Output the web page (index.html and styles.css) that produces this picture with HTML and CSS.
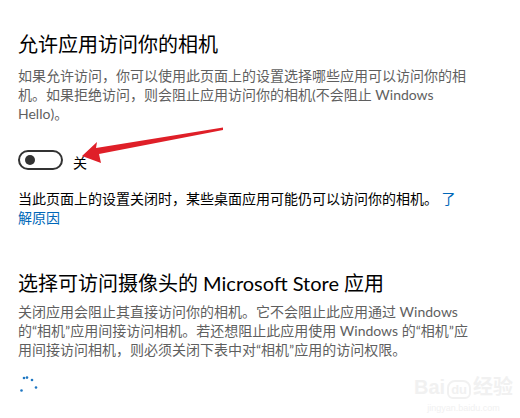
FILE: index.html
```html
<!DOCTYPE html>
<html lang="zh-CN">
<head>
  <meta charset="UTF-8">
  <title>相机隐私设置</title>
  <link rel="stylesheet" href="styles.css">
</head>
<body>
  <div class="page">
    <section class="group">
      <h2 class="group-title">允许应用访问你的相机</h2>
      <p class="group-desc">如果允许访问，你可以使用此页面上的设置选择哪些应用可以访问你的相机。如果拒绝访问，则会阻止应用访问你的相机(不会阻止 Windows Hello)。</p>

      <div class="toggle-row">
        <span class="toggle"><span class="knob"></span></span>
        <span class="toggle-label">关</span>
      </div>

      <p class="note">当此页面上的设置关闭时，某些桌面应用可能仍可以访问你的相机。 <a href="#" class="link">了解原因</a></p>
    </section>

    <section class="group group-apps">
      <h2 class="group-title">选择可访问摄像头的 Microsoft Store 应用</h2>
      <p class="group-desc desc-apps">关闭应用会阻止其直接访问你的相机。它不会阻止此应用通过 Windows <span class="nobr">的“相机”</span>应用间接访问相机。若还想阻止此应用使用 Windows 的“相机”应<br>用间接访问相机，则必须关闭下表中对“相机”应用的访问权限。</p>

      <div class="spinner">
        <svg width="24" height="22" viewBox="0 0 24 22">
          <circle cx="6" cy="4" r="1.3"/>
          <circle cx="9" cy="3.6" r="1.3"/>
          <circle cx="14" cy="6" r="1.3"/>
          <circle cx="3.5" cy="16.5" r="1.3"/>
          <circle cx="18" cy="13.5" r="1.3"/>
        </svg>
      </div>
    </section>
  </div>

  <!-- annotation arrow drawn over the screenshot -->
  <svg class="arrow" width="520" height="418" viewBox="0 0 520 418">
    <polygon points="82,156 97,142 96,148 223,127.5 223,130 99,154 101,163"/>
  </svg>

  <div class="watermark">
    <div class="wm-logo">Bai<span class="wm-du">du</span>经验</div>
    <div class="wm-url">jingyan.baidu.com</div>
  </div>
</body>
</html>
```

FILE: styles.css
```css
:root {
  --text: #000000;
  --text-2: #5f5f5f;
  --accent: #0067b8;
  --spinner: #1f77c2;
  --arrow: #df1f28;
  --mark: #f1f1f1;
}

* {
  margin: 0;
  padding: 0;
  box-sizing: border-box;
}

body {
  background: #ffffff;
  color: var(--text);
  font-family: 'Lato', 'Noto Sans CJK SC', sans-serif;
  font-size: 14px;
  width: 520px;
  height: 418px;
  overflow: hidden;
  position: relative;
}

.page {
  padding: 30px 18px 0;
  width: 500px;
}

.group-title {
  font-size: 20px;
  font-weight: 400;
  line-height: 28px;
}

.group-desc {
  color: var(--text-2);
  line-height: 19px;
  margin-top: 8px;
  width: 449px;
}

.desc-apps {
  margin-top: 5px;
  width: 470px;
}

.nobr {
  white-space: nowrap;
}

.toggle-row {
  display: flex;
  align-items: center;
  margin-top: 27px;
  height: 20px;
}

.toggle {
  width: 45px;
  height: 20px;
  border: 2px solid #333333;
  border-radius: 10px;
  display: flex;
  align-items: center;
  padding-left: 5px;
}

.knob {
  width: 10px;
  height: 10px;
  border-radius: 50%;
  background: #333333;
}

.toggle-label {
  margin-left: 10px;
  padding-top: 3px;
}

.note {
  margin-top: 20px;
  line-height: 18.5px;
  width: 446px;
}

.link {
  color: var(--accent);
  text-decoration: none;
}

.group-apps {
  margin-top: 42px;
}

.spinner {
  margin-top: 15px;
  height: 22px;
}

.spinner svg {
  fill: var(--spinner);
  display: block;
}

.arrow {
  position: absolute;
  left: 0;
  top: 0;
  fill: var(--arrow);
  pointer-events: none;
}

.watermark {
  position: absolute;
  left: 414px;
  top: 376px;
  color: var(--mark);
  text-align: center;
}

.wm-logo {
  font-family: 'Liberation Sans', 'Noto Sans CJK SC', sans-serif;
  font-size: 20px;
  font-weight: 700;
  line-height: 22px;
}

.wm-du {
  font-size: 13px;
  border: 2px solid var(--mark);
  border-radius: 8px 8px 6px 6px;
  padding: 0 2px;
  margin: 0 2px;
}

.wm-url {
  font-family: 'Liberation Sans', sans-serif;
  font-size: 9px;
  line-height: 14px;
}
```
